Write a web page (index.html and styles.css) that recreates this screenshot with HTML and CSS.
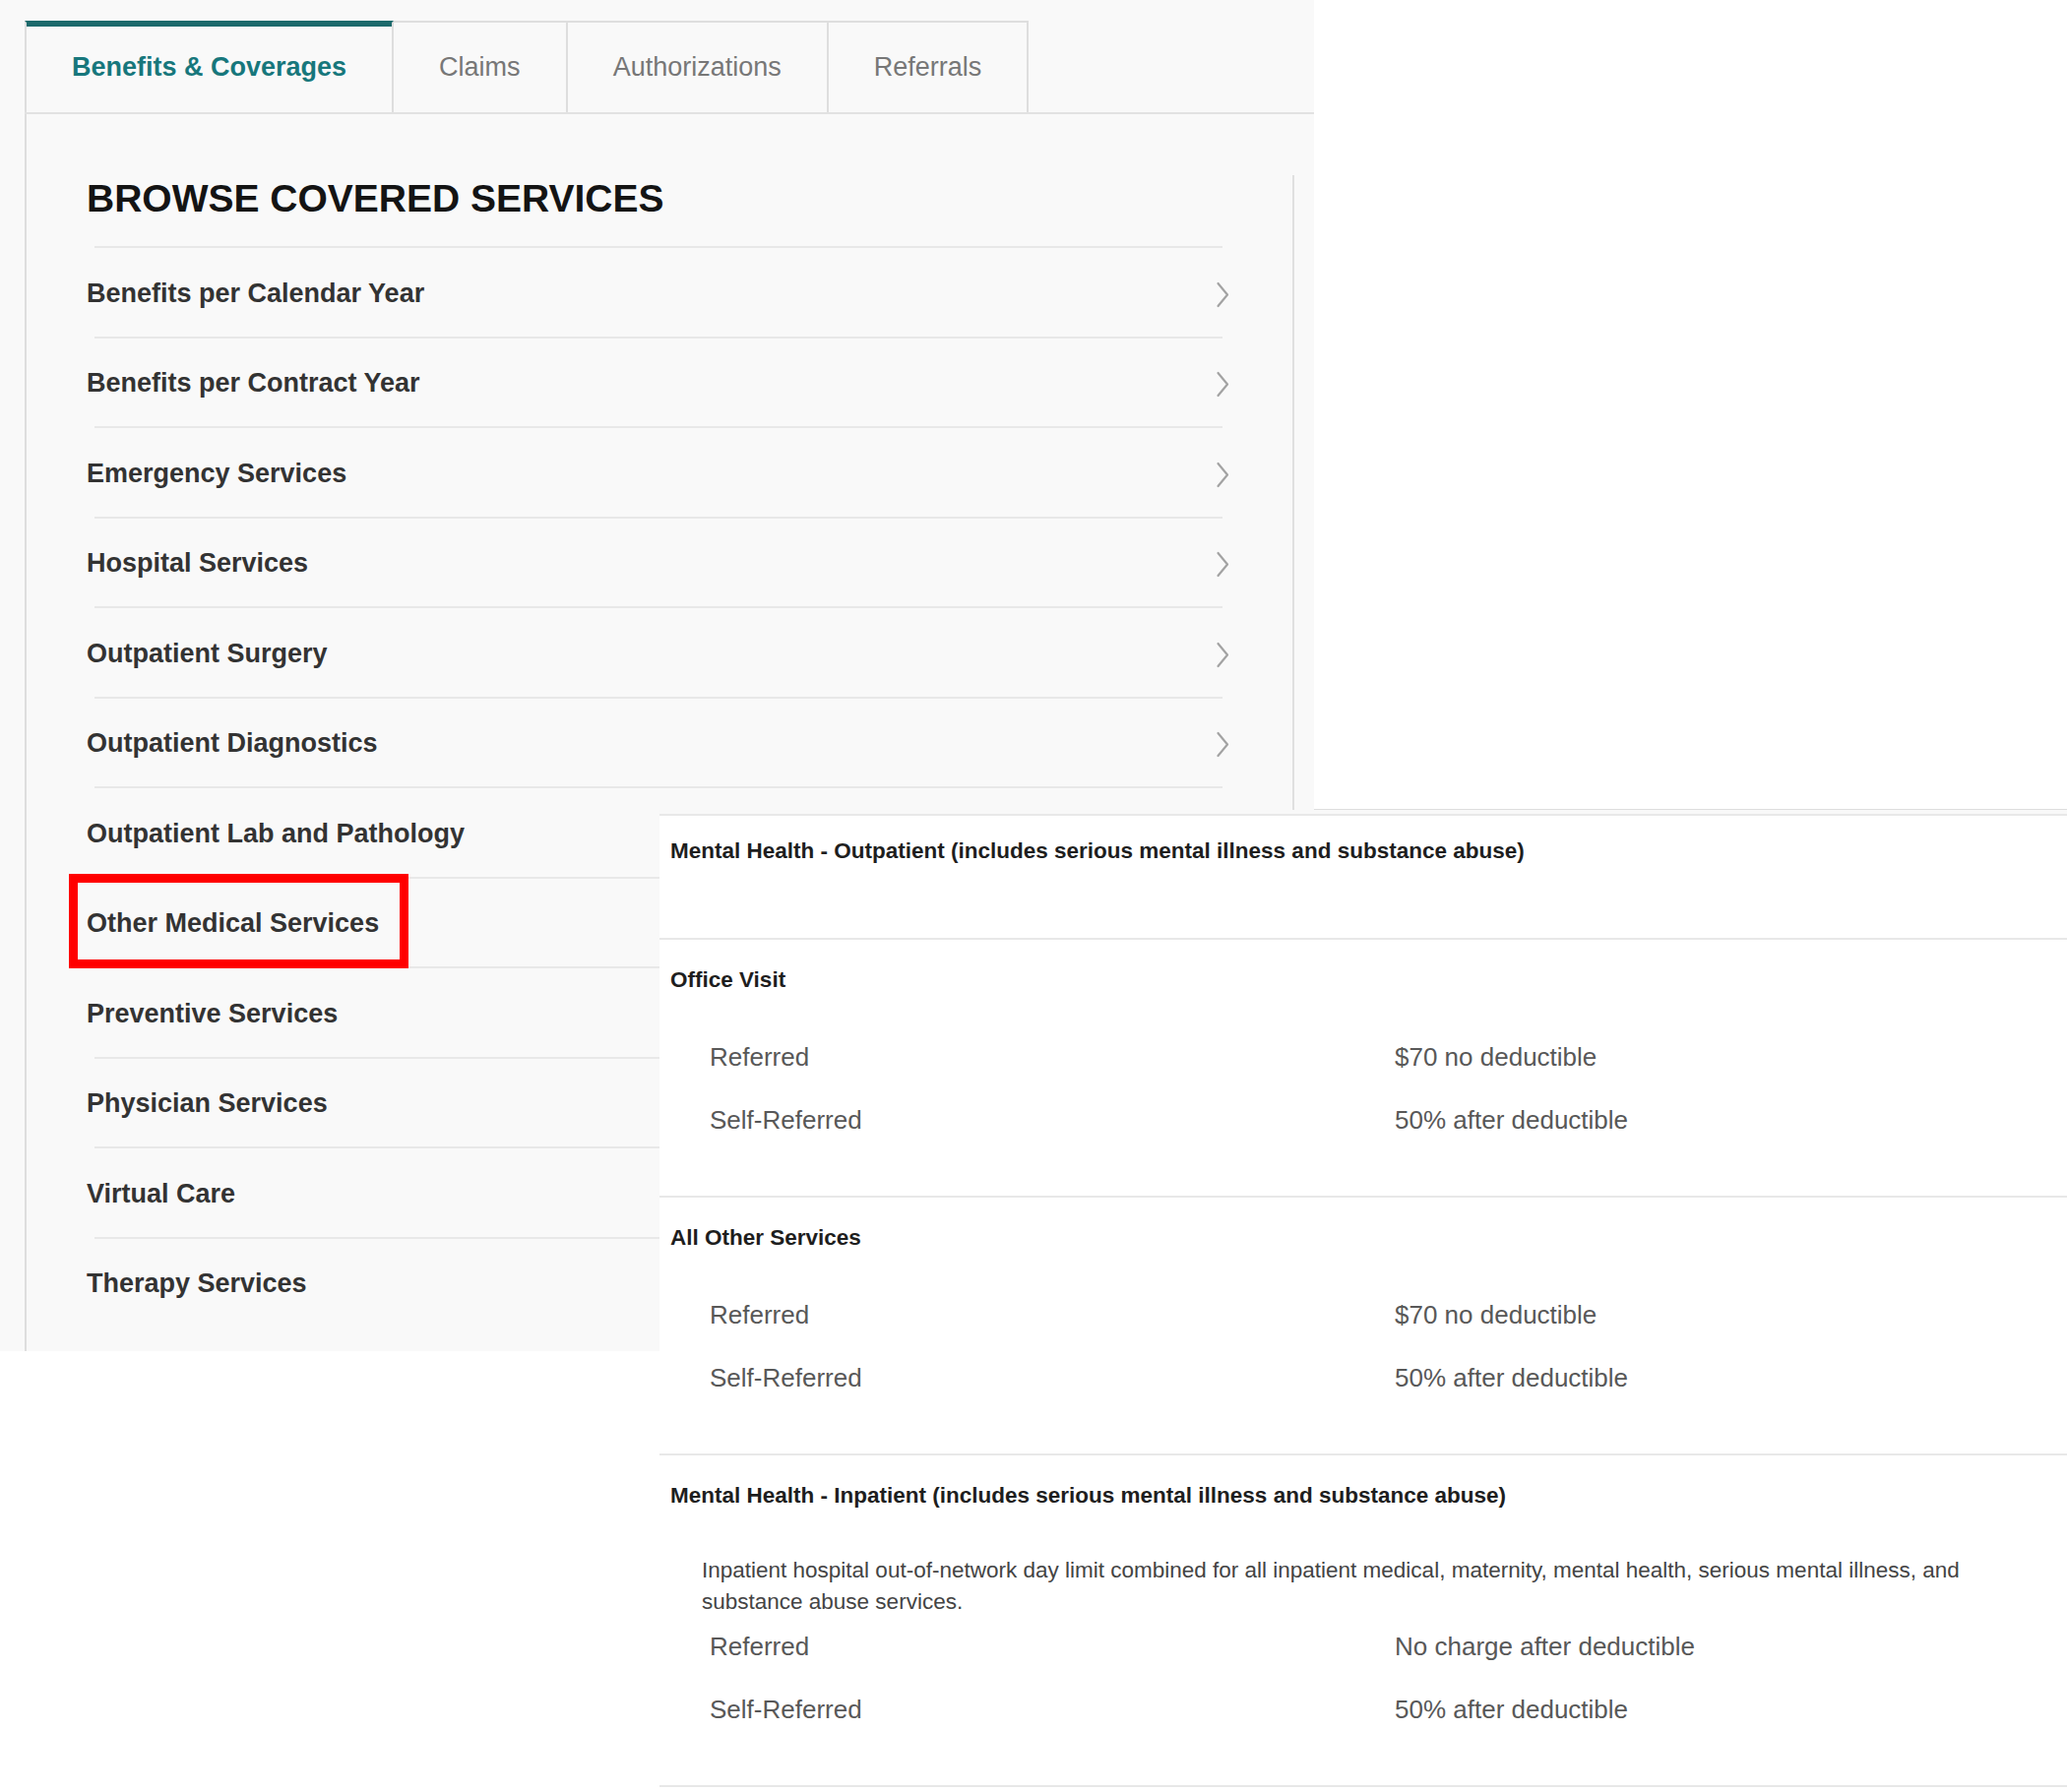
FILE: index.html
```html
<!DOCTYPE html>
<html lang="en">
<head>
<meta charset="utf-8">
<title>Browse Covered Services</title>
<link rel="stylesheet" href="styles.css">
</head>
<body>
<div class="page">
  <section class="left-panel">
    <nav class="tabs">
      <div class="tab active">Benefits &amp; Coverages</div>
      <div class="tab">Claims</div>
      <div class="tab">Authorizations</div>
      <div class="tab">Referrals</div>
    </nav>
    <div class="content">
      <div class="main-col">
        <h1 class="heading">BROWSE COVERED SERVICES</h1>
        <ul class="service-list">
          <li class="service"><span class="service-name">Benefits per Calendar Year</span><svg class="chev" viewBox="0 0 14 27" width="14" height="27"><path d="M2.5 2 L12 13.5 L2.5 25"/></svg></li>
          <li class="service"><span class="service-name">Benefits per Contract Year</span><svg class="chev" viewBox="0 0 14 27" width="14" height="27"><path d="M2.5 2 L12 13.5 L2.5 25"/></svg></li>
          <li class="service"><span class="service-name">Emergency Services</span><svg class="chev" viewBox="0 0 14 27" width="14" height="27"><path d="M2.5 2 L12 13.5 L2.5 25"/></svg></li>
          <li class="service"><span class="service-name">Hospital Services</span><svg class="chev" viewBox="0 0 14 27" width="14" height="27"><path d="M2.5 2 L12 13.5 L2.5 25"/></svg></li>
          <li class="service"><span class="service-name">Outpatient Surgery</span><svg class="chev" viewBox="0 0 14 27" width="14" height="27"><path d="M2.5 2 L12 13.5 L2.5 25"/></svg></li>
          <li class="service"><span class="service-name">Outpatient Diagnostics</span><svg class="chev" viewBox="0 0 14 27" width="14" height="27"><path d="M2.5 2 L12 13.5 L2.5 25"/></svg></li>
          <li class="service"><span class="service-name">Outpatient Lab and Pathology</span><svg class="chev" viewBox="0 0 14 27" width="14" height="27"><path d="M2.5 2 L12 13.5 L2.5 25"/></svg></li>
          <li class="service highlighted"><span class="service-name">Other Medical Services</span><svg class="chev" viewBox="0 0 14 27" width="14" height="27"><path d="M2.5 2 L12 13.5 L2.5 25"/></svg><span class="red-box"></span></li>
          <li class="service"><span class="service-name">Preventive Services</span><svg class="chev" viewBox="0 0 14 27" width="14" height="27"><path d="M2.5 2 L12 13.5 L2.5 25"/></svg></li>
          <li class="service"><span class="service-name">Physician Services</span><svg class="chev" viewBox="0 0 14 27" width="14" height="27"><path d="M2.5 2 L12 13.5 L2.5 25"/></svg></li>
          <li class="service"><span class="service-name">Virtual Care</span><svg class="chev" viewBox="0 0 14 27" width="14" height="27"><path d="M2.5 2 L12 13.5 L2.5 25"/></svg></li>
          <li class="service"><span class="service-name">Therapy Services</span><svg class="chev" viewBox="0 0 14 27" width="14" height="27"><path d="M2.5 2 L12 13.5 L2.5 25"/></svg></li>
        </ul>
      </div>
      <div class="divider"></div>
    </div>
  </section>
  <div class="right-filler"></div>

  <section class="detail">
    <div class="detail-strip"></div>
    <div class="detail-body">
      <div class="sec sec-title">
        <h2 class="sec-head">Mental Health - Outpatient (includes serious mental illness and substance abuse)</h2>
      </div>
      <div class="sec">
        <h3 class="sec-head">Office Visit</h3>
        <div class="rows">
          <div class="label">Referred</div><div class="value">$70 no deductible</div>
          <div class="label">Self-Referred</div><div class="value">50% after deductible</div>
        </div>
      </div>
      <div class="sec">
        <h3 class="sec-head">All Other Services</h3>
        <div class="rows">
          <div class="label">Referred</div><div class="value">$70 no deductible</div>
          <div class="label">Self-Referred</div><div class="value">50% after deductible</div>
        </div>
      </div>
      <div class="sec">
        <h2 class="sec-head">Mental Health - Inpatient (includes serious mental illness and substance abuse)</h2>
        <p class="note">Inpatient hospital out-of-network day limit combined for all inpatient medical, maternity, mental health, serious mental illness, and substance abuse services.</p>
        <div class="rows rows-tight">
          <div class="label">Referred</div><div class="value">No charge after deductible</div>
          <div class="label">Self-Referred</div><div class="value">50% after deductible</div>
        </div>
      </div>
    </div>
  </section>
</div>
</body>
</html>
```

FILE: styles.css
```css
* {
  box-sizing: border-box;
}

html, body {
  margin: 0;
  padding: 0;
  background: #ffffff;
}

body {
  font-family: "Liberation Sans", Arial, sans-serif;
  color: #333333;
}

.page {
  position: relative;
  width: 2100px;
  height: 1821px;
  display: flex;
  align-items: flex-start;
  overflow: hidden;
}

/* ---------- left panel ---------- */
.left-panel {
  width: 1335px;
  height: 1373px;
  flex: none;
  background: #f9f9f9;
  padding: 21px 0 0 25px;
  display: flex;
  flex-direction: column;
}

.tabs {
  display: flex;
  border-bottom: 2px solid #e2e2e2;
  flex: none;
}

.tab {
  height: 93px;
  padding: 0 46px;
  display: flex;
  align-items: center;
  border-top: 2px solid #dedede;
  border-right: 2px solid #dedede;
  font-size: 27px;
  color: #777777;
  white-space: nowrap;
}

.tab:first-child {
  border-left: 2px solid #dedede;
}

.tab.active {
  border-top-color: #1c6a6c;
  box-shadow: inset 0 4px 0 #1c6a6c;
  color: #17777c;
  font-weight: bold;
}

.content {
  flex: 1;
  display: flex;
  border-left: 2px solid #dedede;
}

.main-col {
  width: 1286px;
  padding: 0 71px 0 61px;
}

.heading {
  margin: 66px 0 29px;
  font-size: 39px;
  line-height: 39px;
  font-weight: bold;
  color: #141414;
}

.service-list {
  list-style: none;
  margin: 0;
  padding: 0;
}

.service {
  position: relative;
  height: 91.5px;
  margin-left: 8px;
  border-top: 2px solid #e8e8e8;
  display: flex;
  align-items: center;
  justify-content: space-between;
}

.service-name {
  margin: 3px 0 0 -8px;
  font-size: 27px;
  font-weight: bold;
  color: #333333;
}

.chev {
  margin: 5px -7px 0 0;
  fill: none;
  stroke: #a3a3a3;
  stroke-width: 2.2;
  stroke-linecap: round;
  stroke-linejoin: round;
}

.red-box {
  position: absolute;
  z-index: 2;
  left: -26px;
  top: -4.5px;
  width: 345px;
  height: 96px;
  border: 9px solid #ff0000;
}

.divider {
  width: 2px;
  margin-top: 62px;
  background: #e0e0e0;
  flex: none;
}

.right-filler {
  flex: 1;
  height: 823px;
  border-bottom: 1px solid #dedede;
}

/* ---------- detail overlay ---------- */
.detail {
  position: absolute;
  z-index: 5;
  left: 670px;
  top: 823px;
  right: 0;
  bottom: 0;
  background: #ffffff;
}

.detail-strip {
  height: 4px;
  background: #f8f8f8;
}

.detail-body {
  border-top: 2px solid #e8e8e8;
}

.sec {
  padding: 26px 0 45px 11px;
  border-bottom: 2px solid #e8e8e8;
}

.sec-title {
  padding: 21px 0 73px 11px;
}

.sec-head {
  margin: 0;
  font-size: 22.5px;
  line-height: 30px;
  font-weight: bold;
  color: #1e1e1e;
}

.rows {
  display: grid;
  grid-template-columns: 696px 1fr;
  margin-top: 31px;
  padding-left: 40px;
}

.rows-tight {
  margin-top: -3px;
}

.label,
.value {
  font-size: 26px;
  line-height: 64px;
  color: #585858;
}

.note {
  margin: 45px 0 0 32px;
  padding-right: 40px;
  font-size: 22.5px;
  line-height: 32px;
  color: #444444;
}
```
